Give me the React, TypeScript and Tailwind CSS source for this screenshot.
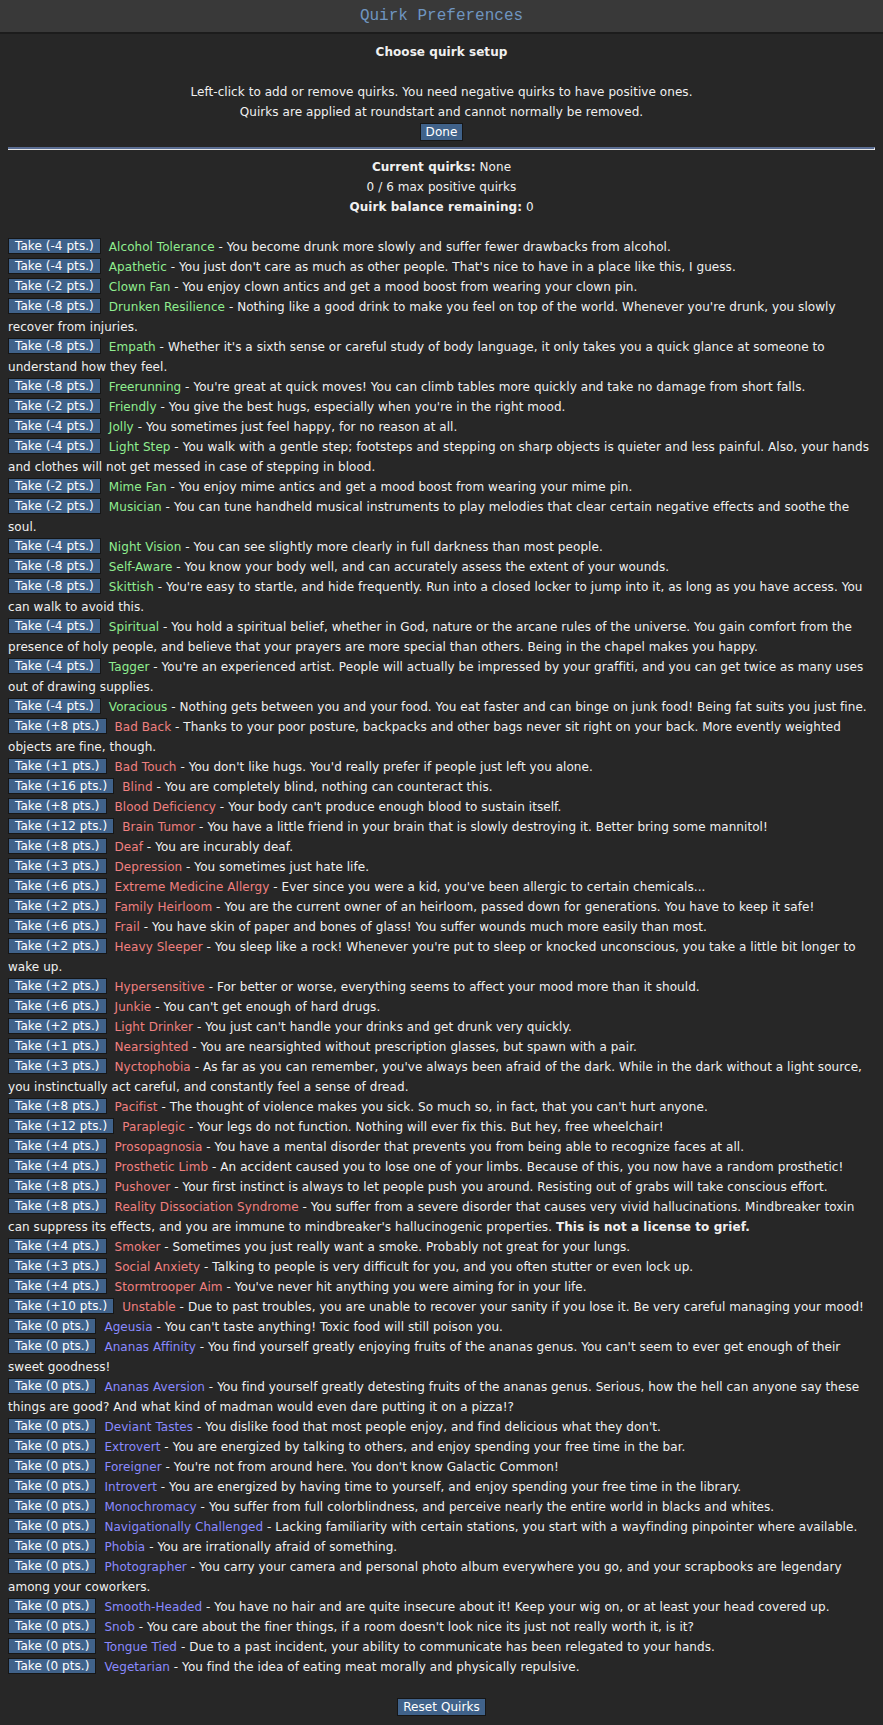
import React from "react";

type Q = { cost: string; name: string; desc: React.ReactNode; kind: "g" | "r" | "p" };

const quirks: Q[] = [
  { kind: "g", cost: "-4", name: "Alcohol Tolerance", desc: "You become drunk more slowly and suffer fewer drawbacks from alcohol." },
  { kind: "g", cost: "-4", name: "Apathetic", desc: "You just don't care as much as other people. That's nice to have in a place like this, I guess." },
  { kind: "g", cost: "-2", name: "Clown Fan", desc: "You enjoy clown antics and get a mood boost from wearing your clown pin." },
  { kind: "g", cost: "-8", name: "Drunken Resilience", desc: "Nothing like a good drink to make you feel on top of the world. Whenever you're drunk, you slowly recover from injuries." },
  { kind: "g", cost: "-8", name: "Empath", desc: "Whether it's a sixth sense or careful study of body language, it only takes you a quick glance at someone to understand how they feel." },
  { kind: "g", cost: "-8", name: "Freerunning", desc: "You're great at quick moves! You can climb tables more quickly and take no damage from short falls." },
  { kind: "g", cost: "-2", name: "Friendly", desc: "You give the best hugs, especially when you're in the right mood." },
  { kind: "g", cost: "-4", name: "Jolly", desc: "You sometimes just feel happy, for no reason at all." },
  { kind: "g", cost: "-4", name: "Light Step", desc: "You walk with a gentle step; footsteps and stepping on sharp objects is quieter and less painful. Also, your hands and clothes will not get messed in case of stepping in blood." },
  { kind: "g", cost: "-2", name: "Mime Fan", desc: "You enjoy mime antics and get a mood boost from wearing your mime pin." },
  { kind: "g", cost: "-2", name: "Musician", desc: "You can tune handheld musical instruments to play melodies that clear certain negative effects and soothe the soul." },
  { kind: "g", cost: "-4", name: "Night Vision", desc: "You can see slightly more clearly in full darkness than most people." },
  { kind: "g", cost: "-8", name: "Self-Aware", desc: "You know your body well, and can accurately assess the extent of your wounds." },
  { kind: "g", cost: "-8", name: "Skittish", desc: "You're easy to startle, and hide frequently. Run into a closed locker to jump into it, as long as you have access. You can walk to avoid this." },
  { kind: "g", cost: "-4", name: "Spiritual", desc: "You hold a spiritual belief, whether in God, nature or the arcane rules of the universe. You gain comfort from the presence of holy people, and believe that your prayers are more special than others. Being in the chapel makes you happy." },
  { kind: "g", cost: "-4", name: "Tagger", desc: "You're an experienced artist. People will actually be impressed by your graffiti, and you can get twice as many uses out of drawing supplies." },
  { kind: "g", cost: "-4", name: "Voracious", desc: "Nothing gets between you and your food. You eat faster and can binge on junk food! Being fat suits you just fine." },
  { kind: "r", cost: "+8", name: "Bad Back", desc: "Thanks to your poor posture, backpacks and other bags never sit right on your back. More evently weighted objects are fine, though." },
  { kind: "r", cost: "+1", name: "Bad Touch", desc: "You don't like hugs. You'd really prefer if people just left you alone." },
  { kind: "r", cost: "+16", name: "Blind", desc: "You are completely blind, nothing can counteract this." },
  { kind: "r", cost: "+8", name: "Blood Deficiency", desc: "Your body can't produce enough blood to sustain itself." },
  { kind: "r", cost: "+12", name: "Brain Tumor", desc: "You have a little friend in your brain that is slowly destroying it. Better bring some mannitol!" },
  { kind: "r", cost: "+8", name: "Deaf", desc: "You are incurably deaf." },
  { kind: "r", cost: "+3", name: "Depression", desc: "You sometimes just hate life." },
  { kind: "r", cost: "+6", name: "Extreme Medicine Allergy", desc: "Ever since you were a kid, you've been allergic to certain chemicals..." },
  { kind: "r", cost: "+2", name: "Family Heirloom", desc: "You are the current owner of an heirloom, passed down for generations. You have to keep it safe!" },
  { kind: "r", cost: "+6", name: "Frail", desc: "You have skin of paper and bones of glass! You suffer wounds much more easily than most." },
  { kind: "r", cost: "+2", name: "Heavy Sleeper", desc: "You sleep like a rock! Whenever you're put to sleep or knocked unconscious, you take a little bit longer to wake up." },
  { kind: "r", cost: "+2", name: "Hypersensitive", desc: "For better or worse, everything seems to affect your mood more than it should." },
  { kind: "r", cost: "+6", name: "Junkie", desc: "You can't get enough of hard drugs." },
  { kind: "r", cost: "+2", name: "Light Drinker", desc: "You just can't handle your drinks and get drunk very quickly." },
  { kind: "r", cost: "+1", name: "Nearsighted", desc: "You are nearsighted without prescription glasses, but spawn with a pair." },
  { kind: "r", cost: "+3", name: "Nyctophobia", desc: "As far as you can remember, you've always been afraid of the dark. While in the dark without a light source, you instinctually act careful, and constantly feel a sense of dread." },
  { kind: "r", cost: "+8", name: "Pacifist", desc: "The thought of violence makes you sick. So much so, in fact, that you can't hurt anyone." },
  { kind: "r", cost: "+12", name: "Paraplegic", desc: "Your legs do not function. Nothing will ever fix this. But hey, free wheelchair!" },
  { kind: "r", cost: "+4", name: "Prosopagnosia", desc: "You have a mental disorder that prevents you from being able to recognize faces at all." },
  { kind: "r", cost: "+4", name: "Prosthetic Limb", desc: "An accident caused you to lose one of your limbs. Because of this, you now have a random prosthetic!" },
  { kind: "r", cost: "+8", name: "Pushover", desc: "Your first instinct is always to let people push you around. Resisting out of grabs will take conscious effort." },
  {
    kind: "r",
    cost: "+8",
    name: "Reality Dissociation Syndrome",
    desc: (
      <>
        You suffer from a severe disorder that causes very vivid hallucinations. Mindbreaker toxin can suppress its effects, and you are immune to mindbreaker's hallucinogenic properties. <b>This is not a license to grief.</b>
      </>
    ),
  },
  { kind: "r", cost: "+4", name: "Smoker", desc: "Sometimes you just really want a smoke. Probably not great for your lungs." },
  { kind: "r", cost: "+3", name: "Social Anxiety", desc: "Talking to people is very difficult for you, and you often stutter or even lock up." },
  { kind: "r", cost: "+4", name: "Stormtrooper Aim", desc: "You've never hit anything you were aiming for in your life." },
  { kind: "r", cost: "+10", name: "Unstable", desc: "Due to past troubles, you are unable to recover your sanity if you lose it. Be very careful managing your mood!" },
  { kind: "p", cost: "0", name: "Ageusia", desc: "You can't taste anything! Toxic food will still poison you." },
  { kind: "p", cost: "0", name: "Ananas Affinity", desc: "You find yourself greatly enjoying fruits of the ananas genus. You can't seem to ever get enough of their sweet goodness!" },
  { kind: "p", cost: "0", name: "Ananas Aversion", desc: "You find yourself greatly detesting fruits of the ananas genus. Serious, how the hell can anyone say these things are good? And what kind of madman would even dare putting it on a pizza!?" },
  { kind: "p", cost: "0", name: "Deviant Tastes", desc: "You dislike food that most people enjoy, and find delicious what they don't." },
  { kind: "p", cost: "0", name: "Extrovert", desc: "You are energized by talking to others, and enjoy spending your free time in the bar." },
  { kind: "p", cost: "0", name: "Foreigner", desc: "You're not from around here. You don't know Galactic Common!" },
  { kind: "p", cost: "0", name: "Introvert", desc: "You are energized by having time to yourself, and enjoy spending your free time in the library." },
  { kind: "p", cost: "0", name: "Monochromacy", desc: "You suffer from full colorblindness, and perceive nearly the entire world in blacks and whites." },
  { kind: "p", cost: "0", name: "Navigationally Challenged", desc: "Lacking familiarity with certain stations, you start with a wayfinding pinpointer where available." },
  { kind: "p", cost: "0", name: "Phobia", desc: "You are irrationally afraid of something." },
  { kind: "p", cost: "0", name: "Photographer", desc: "You carry your camera and personal photo album everywhere you go, and your scrapbooks are legendary among your coworkers." },
  { kind: "p", cost: "0", name: "Smooth-Headed", desc: "You have no hair and are quite insecure about it! Keep your wig on, or at least your head covered up." },
  { kind: "p", cost: "0", name: "Snob", desc: "You care about the finer things, if a room doesn't look nice its just not really worth it, is it?" },
  { kind: "p", cost: "0", name: "Tongue Tied", desc: "Due to a past incident, your ability to communicate has been relegated to your hands." },
  { kind: "p", cost: "0", name: "Vegetarian", desc: "You find the idea of eating meat morally and physically repulsive." },
];

const nameColor: Record<Q["kind"], string> = {
  g: "text-[#90ee90]",
  r: "text-[#f08080]",
  p: "text-[#8a8aff]",
};

export default function App() {
  return (
    <div className="min-h-[1725px] bg-[#272727] text-[#f0f0f0] text-[12px] leading-[20px] tracking-[0.06px] [font-family:'DejaVu_Sans',Verdana,sans-serif]">
      <div className="h-[34px] bg-[#393939] border-b-2 border-[#1c1c1c] flex items-center justify-center">
        <span className="text-[16px] tracking-normal text-[#6f95c0] [font-family:'Liberation_Mono',monospace]">Quirk Preferences</span>
      </div>
      <div className="px-2 pt-2 pb-[7px]">
        <div className="text-center">
          <div className="font-bold">Choose quirk setup</div>
          <div className="h-[20px]" />
          <div>Left-click to add or remove quirks. You need negative quirks to have positive ones.</div>
          <div>Quirks are applied at roundstart and cannot normally be removed.</div>
          <div className="h-[20px] flex items-center justify-center">
            <span className="inline-block h-[18px] leading-[16px] px-[5px] border border-[#161616] bg-[#40628a] text-white">Done</span>
          </div>
        </div>
        <div className="mt-[5px] mb-[7px] h-[3px] border-t-2 border-t-[#5a6d93] border-b border-b-[#e8e8e8] border-r border-r-white" />
        <div className="text-center">
          <div>
            <b>Current quirks:</b> None
          </div>
          <div>0 / 6 max positive quirks</div>
          <div>
            <b>Quirk balance remaining:</b> 0
          </div>
        </div>
        <div className="h-[20px]" />
        <div>
          {quirks.map((q) => (
            <div key={q.name}>
              <span className="inline-block align-top mt-[1px] h-[16px] leading-[14px] px-[6px] mr-[8px] border border-[#161616] bg-[#40628a] text-white">
                Take ({q.cost} pts.)
              </span>
              <span className={nameColor[q.kind]}>{q.name}</span> - {q.desc}
            </div>
          ))}
        </div>
        <div className="h-[20px]" />
        <div className="h-[20px] flex items-center justify-center">
          <span className="inline-block h-[18px] leading-[16px] px-[5px] border border-[#161616] bg-[#40628a] text-white">Reset Quirks</span>
        </div>
      </div>
    </div>
  );
}
